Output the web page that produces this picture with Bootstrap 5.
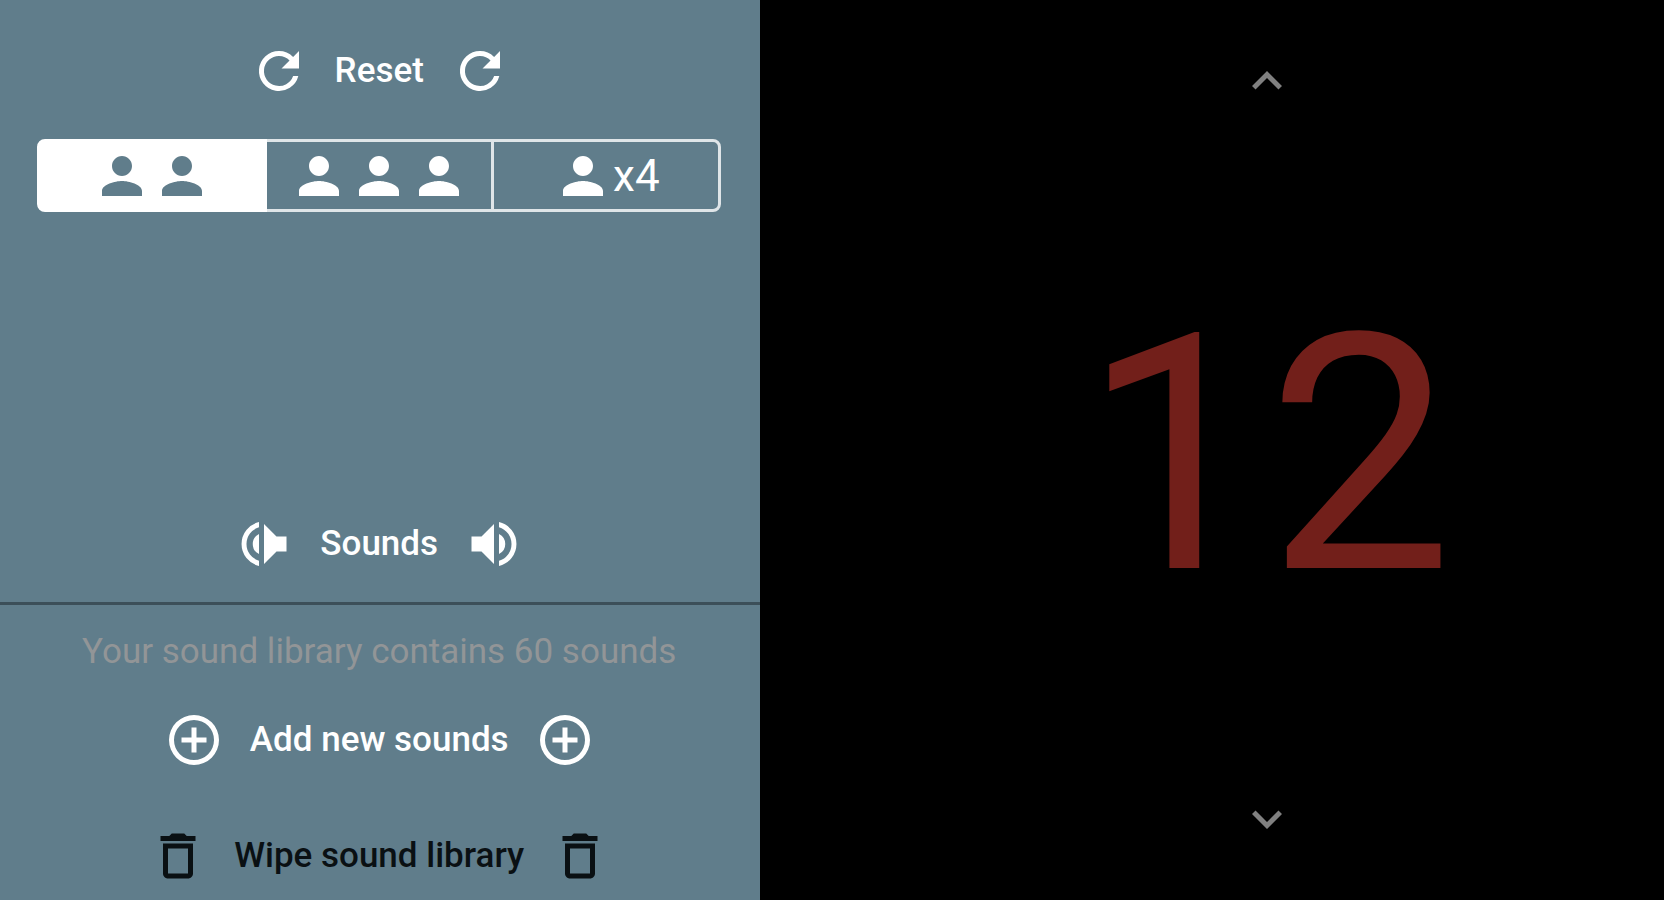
<!DOCTYPE html>
<html lang="en">
<head>
<meta charset="utf-8">
<meta name="viewport" content="width=device-width, initial-scale=1">
<title>Counter</title>
<link href="https://cdn.jsdelivr.net/npm/bootstrap@5.3.0/dist/css/bootstrap.min.css" rel="stylesheet">
<style>
  body { font-family: Roboto, "Liberation Sans", sans-serif; background: #000; }
  .side-panel { width: 45.7%; background: #607d8b; color: #fff; }
  .glyph { width: 60px; height: 60px; fill: currentColor; flex: none; }
  .flip { transform: scaleX(-1); }
  .action { font-size: 35px; font-weight: 500; line-height: 62px; color: #fff; border: 0; gap: 26px; white-space: nowrap; }
  .action:hover { color: #e3eaed; }
  .action.danger, .action.danger:hover { color: #0a1013; }
  .action-row { padding-right: 2px; }
  .reset-row { padding-top: 40px; }
  .players { margin: 37px 39px 0 37px; }
  .players .btn { --bs-btn-color: #fff; --bs-btn-border-color: #dfe5e8; --bs-btn-border-width: 3px; --bs-btn-border-radius: 8px;
    --bs-btn-active-color: #607d8b; --bs-btn-active-bg: #fff; --bs-btn-active-border-color: #fff;
    --bs-btn-hover-color: #fff; --bs-btn-hover-border-color: #dfe5e8;
    flex: 1 1 0; height: 73px; font-size: 44px; line-height: 62px; }
  .players.btn-group > .btn:not(:first-of-type) { margin-left: -3px; }
  .divider { height: 3px; margin: 27px 0 0; border: 0; background: #3c4f59; opacity: 1; }
  .library-note { margin: 19px 0 0; font-size: 35px; line-height: 56px; color: #929597; }
  .add-row { margin-top: 29px; }
  .wipe-row { margin-top: 54px; padding-bottom: 13px; }
  .score-panel { padding: 51px 0 51px 110px; }
  .step { color: #808080; border: 0; line-height: 1; }
  .step:hover { color: #aaa; }
  .step svg { width: 60px; height: 60px; fill: currentColor; }
  .score { padding-top: 12px; font-size: 330px; line-height: 388px; color: #721f1a; }
</style>
<script src="https://cdn.jsdelivr.net/npm/bootstrap@5.3.0/dist/js/bootstrap.bundle.min.js"></script>
</head>
<body>
<svg class="d-none" aria-hidden="true">
  <symbol id="refresh" viewBox="0 0 24 24"><path d="M17.65 6.35A7.96 7.96 0 0 0 12 4a8 8 0 1 0 7.73 10h-2.08A6 6 0 1 1 12 6c1.66 0 3.14.69 4.22 1.78L13 11h7V4z"/></symbol>
  <symbol id="person" viewBox="0 0 24 24"><path d="M12 12c2.21 0 4-1.79 4-4s-1.79-4-4-4-4 1.79-4 4 1.79 4 4 4zm0 2c-2.67 0-8 1.34-8 4v2h16v-2c0-2.66-5.33-4-8-4z"/></symbol>
  <symbol id="volume" viewBox="0 0 24 24"><path d="M3 9v6h4l5 5V4L7 9H3zm13.5 3A4.5 4.5 0 0 0 14 7.97v8.05A4.47 4.47 0 0 0 16.5 12zM14 3.23v2.06a7 7 0 0 1 0 13.42v2.06a9 9 0 0 0 0-17.54z"/></symbol>
  <symbol id="add" viewBox="0 0 24 24"><path d="M13 7h-2v4H7v2h4v4h2v-4h4v-2h-4V7zm-1-5a10 10 0 1 0 0 20 10 10 0 0 0 0-20zm0 18a8 8 0 1 1 0-16 8 8 0 0 1 0 16z"/></symbol>
  <symbol id="trash" viewBox="0 0 24 24"><path d="M6 19c0 1.1.9 2 2 2h8c1.1 0 2-.9 2-2V7H6v12zM8 9h8v10H8V9zm7.5-5l-1-1h-5l-1 1H5v2h14V4z"/></symbol>
  <symbol id="up" viewBox="0 0 24 24"><path d="M12 8l-6 6 1.41 1.41L12 10.83l4.59 4.58L18 14z"/></symbol>
  <symbol id="down" viewBox="0 0 24 24"><path d="M16.59 8.59L12 13.17 7.41 8.59 6 10l6 6 6-6z"/></symbol>
</svg>
<div class="d-flex min-vh-100">
  <aside class="side-panel d-flex flex-column flex-shrink-0">
    <div class="action-row reset-row d-flex justify-content-center">
      <button type="button" class="action btn p-0 d-flex align-items-center"><svg class="glyph"><use href="#refresh"/></svg>Reset<svg class="glyph"><use href="#refresh"/></svg></button>
    </div>
    <div class="players btn-group" role="group" aria-label="Number of players">
      <input type="radio" class="btn-check" name="players" id="p2" checked>
      <label class="btn p-0 d-flex align-items-center justify-content-center" for="p2" aria-label="2 players"><svg class="glyph"><use href="#person"/></svg><svg class="glyph"><use href="#person"/></svg></label>
      <input type="radio" class="btn-check" name="players" id="p3">
      <label class="btn p-0 d-flex align-items-center justify-content-center" for="p3" aria-label="3 players"><svg class="glyph"><use href="#person"/></svg><svg class="glyph"><use href="#person"/></svg><svg class="glyph"><use href="#person"/></svg></label>
      <input type="radio" class="btn-check" name="players" id="p4">
      <label class="btn p-0 d-flex align-items-center justify-content-center" for="p4"><svg class="glyph"><use href="#person"/></svg>x4</label>
    </div>
    <div class="action-row mt-auto d-flex justify-content-center">
      <button type="button" class="action btn p-0 d-flex align-items-center"><svg class="glyph flip"><use href="#volume"/></svg>Sounds<svg class="glyph"><use href="#volume"/></svg></button>
    </div>
    <hr class="divider">
    <p class="action-row library-note text-center">Your sound library contains 60 sounds</p>
    <div class="action-row add-row d-flex justify-content-center">
      <button type="button" class="action btn p-0 d-flex align-items-center"><svg class="glyph"><use href="#add"/></svg>Add new sounds<svg class="glyph"><use href="#add"/></svg></button>
    </div>
    <div class="action-row wipe-row d-flex justify-content-center">
      <button type="button" class="action danger btn p-0 d-flex align-items-center"><svg class="glyph"><use href="#trash"/></svg>Wipe sound library<svg class="glyph"><use href="#trash"/></svg></button>
    </div>
  </aside>
  <main class="score-panel flex-grow-1 d-flex flex-column align-items-center justify-content-between">
    <button type="button" class="step btn p-0" aria-label="Increase"><svg><use href="#up"/></svg></button>
    <div class="score">12</div>
    <button type="button" class="step btn p-0" aria-label="Decrease"><svg><use href="#down"/></svg></button>
  </main>
</div>
</body>
</html>
